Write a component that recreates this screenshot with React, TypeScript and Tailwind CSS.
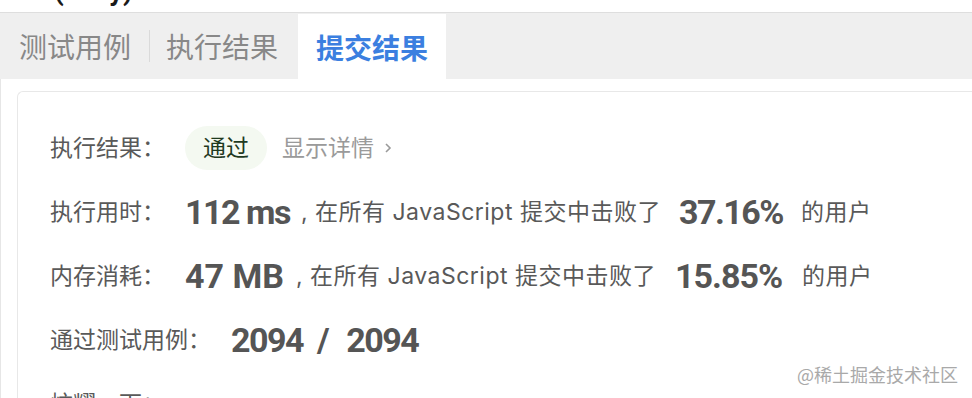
import React from 'react';

const cjk = "font-['Inter','Noto_Sans_CJK_SC',sans-serif]";
const num = "font-['Roboto','Liberation_Sans',sans-serif] font-bold text-[34px] text-[#555555]";
const desc = "text-[23px] tracking-[0.5px] text-[#595959]";

function Row({ label, children }: { label: string; children: React.ReactNode }) {
  return (
    <div className="flex h-[64px] items-center whitespace-nowrap">
      <span className="mr-[20px] text-[23px] text-[#595959]">{label}</span>
      {children}
    </div>
  );
}

export default function App() {
  return (
    <div className={`relative h-[398px] w-[972px] overflow-hidden bg-white ${cjk}`}>
      {/* cropped title above the tabs */}
      <div className="h-[12px] overflow-hidden pl-[54px]">
        <div className="-mt-[24px] font-['Roboto',sans-serif] text-[28px] leading-[30px] font-bold text-[#1a1a1a]">(Easy)</div>
      </div>

      {/* tabs */}
      <div className="flex h-[67px] border-t border-[#dedede] bg-[#efefef] font-['Noto_Sans_CJK_SC',sans-serif]">
        <div className="flex items-center pr-[18px] pl-[19px] text-[28px] text-[#888888]">测试用例</div>
        <div className="my-[17px] w-px bg-[#dadada]" />
        <div className="flex items-center pr-[20px] pl-[16px] text-[28px] text-[#888888]">执行结果</div>
        <div className="mt-px flex items-center bg-white px-[18px] text-[28px] font-bold text-[#3b7fe0]">提交结果</div>
      </div>

      {/* result panel */}
      <div className="h-full border-l border-[#e6e6e6] pt-[12px] pl-[16px]">
        <div className="rounded-l-md border border-r-0 border-[#e8e8e8] pt-[24px] pl-[32px]">
          <Row label="执行结果：">
            <span className="flex h-[44px] w-[82px] items-center justify-center rounded-full bg-[#f4f9f1] text-[23px] text-[#1f3a1f]">通过</span>
            <span className="ml-[15px] flex items-center text-[23px] text-[#9a9a9a]">
              显示详情
              <svg className="ml-[10px] h-[12px] w-[8px]" viewBox="0 0 8 12" fill="none" stroke="#9a9a9a" strokeWidth="1.6">
                <path d="M2 2l4 4-4 4" />
              </svg>
            </span>
          </Row>

          <Row label="执行用时：">
            <span className={`tracking-[-1.5px] ${num}`}>112 ms</span>
            <span className={`ml-[11px] ${desc}`}>, 在所有 JavaScript 提交中击败了</span>
            <span className={`ml-[18px] tracking-[-1.5px] ${num}`}>37.16%</span>
            <span className={`ml-[18px] ${desc}`}>的用户</span>
          </Row>

          <Row label="内存消耗：">
            <span className={num}>47 MB</span>
            <span className={`ml-[12px] ${desc}`}>, 在所有 JavaScript 提交中击败了</span>
            <span className={`ml-[19px] tracking-[-1px] ${num}`}>15.85%</span>
            <span className={`ml-[20px] ${desc}`}>的用户</span>
          </Row>

          <Row label="通过测试用例：">
            <span className={`flex gap-[12px] tracking-[-1.5px] ${num}`}>
              <span>2094</span>
              <span className="pl-[2px] pr-[6px]">/</span>
              <span>2094</span>
            </span>
          </Row>

          <Row label="炫耀一下：">
            <span />
          </Row>
        </div>
      </div>

      {/* watermark */}
      <div className="absolute top-[361px] left-[797px] font-['Noto_Sans_CJK_SC',sans-serif] text-[18px] text-[#a9a9a9]">@稀土掘金技术社区</div>
    </div>
  );
}
